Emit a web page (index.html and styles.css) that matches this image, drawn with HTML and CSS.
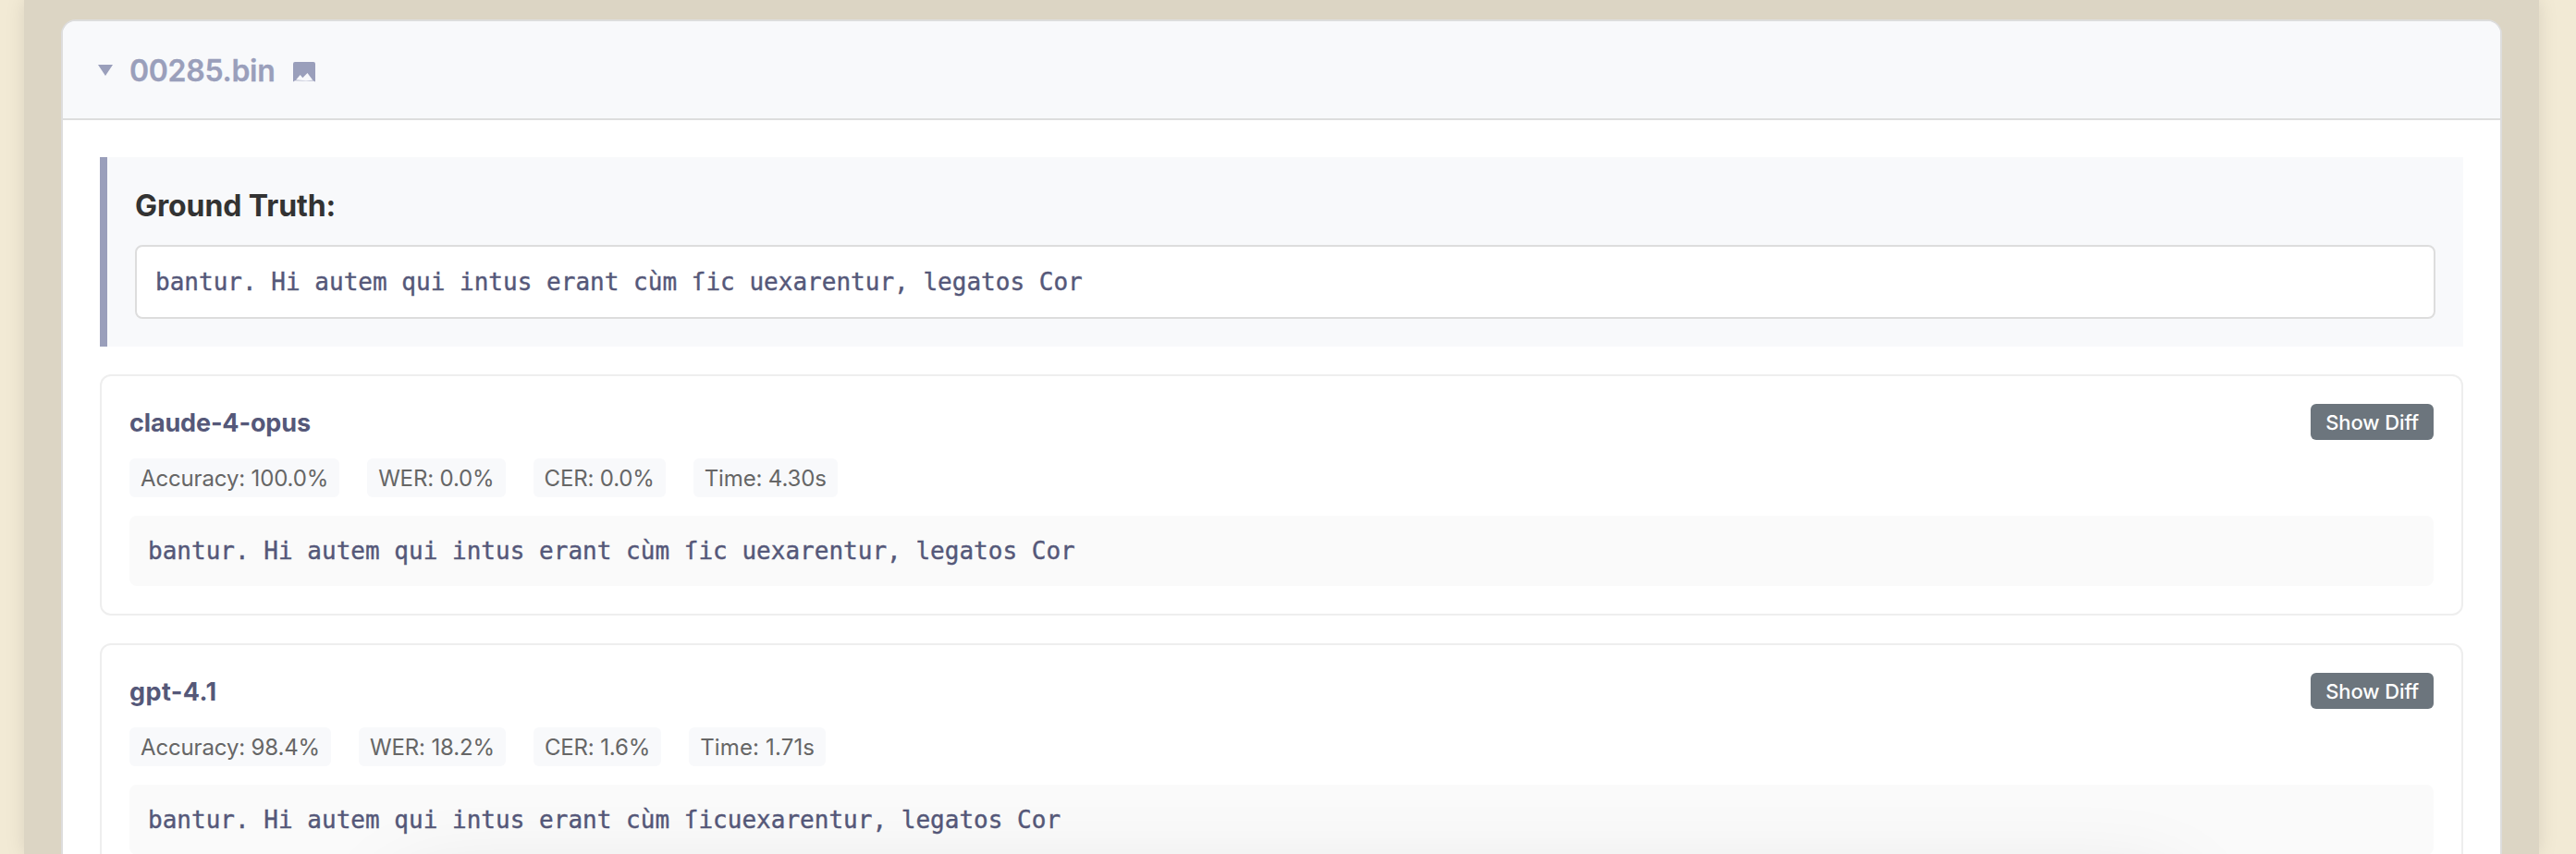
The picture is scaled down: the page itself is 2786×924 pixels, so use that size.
FILE: index.html
```html
<!DOCTYPE html>
<html lang="en">
<head>
<meta charset="utf-8">
<title>00285.bin</title>
<link rel="stylesheet" href="styles.css">
</head>
<body>
<main class="container">
  <section class="sample">
    <header class="sample-header">
      <svg class="caret" viewBox="0 0 16 12"><path d="M0 0h16L8 12z"/></svg>
      <h2 class="sample-title">00285.bin</h2>
      <svg class="image-icon" viewBox="0 0 24 22"><path fill-rule="evenodd" d="M0 21.500V2Q0 0 2 0h20Q24 0 24 2V21.500L22 20.500L14 20.500L2 20.200ZM3 19.400L7.700 14L10.300 17.200L15.500 12L21.300 19.800L14 20.200Z"/></svg>
    </header>
    <div class="sample-body">
      <div class="truth">
        <h3 class="truth-title">Ground Truth:</h3>
        <div class="truth-text">bantur. Hi autem qui intus erant cùm ſic uexarentur, legatos Cor</div>
      </div>
      <article class="result">
        <div class="result-head"><h4 class="model">claude-4-opus</h4><button class="diff">Show Diff</button></div>
        <div class="metrics"><span class="metric">Accuracy: 100.0%</span><span class="metric">WER: 0.0%</span><span class="metric">CER: 0.0%</span><span class="metric">Time: 4.30s</span></div>
        <div class="output">bantur. Hi autem qui intus erant cùm ſic uexarentur, legatos Cor</div>
      </article>
      <article class="result">
        <div class="result-head"><h4 class="model model-short">gpt-4.1</h4><button class="diff">Show Diff</button></div>
        <div class="metrics"><span class="metric">Accuracy: 98.4%</span><span class="metric">WER: 18.2%</span><span class="metric">CER: 1.6%</span><span class="metric metric-wide">Time: 1.71s</span></div>
        <div class="output">bantur. Hi autem qui intus erant cùm ſicuexarentur, legatos Cor</div>
      </article>
    </div>
  </section>
</main>
<div class="bottom-bar"></div>
</body>
</html>
```
FILE: styles.css
```css
* { box-sizing: border-box; }
html, body { height: 100%; overflow: hidden; }
body { margin: 0; background: #f2ead5; font-family: Inter, "Liberation Sans", sans-serif; line-height: 1.4; color: #333; }
h2, h3, h4 { margin: 0; }
.container { height: 924px; overflow: hidden; margin: 0 40px 0 26px; padding: 21px 40px 0; background: #dcd5c4; box-shadow: 0 0 20px rgba(0, 0, 0, 0.1); }
.sample { background: #fff; border: 2px solid #ddd; border-radius: 16px; overflow: hidden; }
.sample-header { display: flex; align-items: center; height: 107px; padding: 0 38px; background: #f8f9fb; border-bottom: 2px solid #ddd; color: #9a9fbb; }
.caret { width: 16px; height: 12px; margin: 1px 18px 0 0; fill: currentColor; }
.sample-title { padding-top: 3px; font-size: 32px; font-weight: 600; letter-spacing: -0.3px; -webkit-text-stroke: 0.3px #9a9fbb; }
.image-icon { width: 24px; height: 22px; margin-left: 20px; margin-top: 4px; fill: currentColor; }
.sample-body { padding: 40px; }
.truth { margin-bottom: 30px; padding: 30px; background: #f8f9fb; border-left: 8px solid #9a9fbb; }
.truth-title { padding-top: 1px; margin-bottom: 19px; font-size: 32px; font-weight: 700; letter-spacing: -0.1px; }
.truth-text, .output { padding: 20px; font-family: "DejaVu Sans Mono", monospace; font-size: 26px; letter-spacing: 0.015px; color: #555879; -webkit-text-stroke: 0.4px #555879; }
.truth-text { background: #fff; border: 2px solid #ddd; border-radius: 8px; }
.result { margin-bottom: 30px; padding: 30px; border: 2px solid #eee; border-radius: 12px; }
.result-head { display: flex; justify-content: space-between; align-items: center; height: 39px; margin-bottom: 20px; }
.model { padding-top: 3px; font-size: 27px; font-weight: 700; letter-spacing: -0.15px; color: #555879; }
.model-short { letter-spacing: 0.4px; }
.diff { height: 39px; padding: 1px 16px 0; border: 0; border-radius: 6px; background: #6c757d; color: #fff; font: 500 22px/38px Inter, "Liberation Sans", sans-serif; letter-spacing: -0.1px; }
.metrics { display: flex; gap: 30px; margin-bottom: 20px; }
.metric { padding: 5px 12px 3px; background: #f8f9fb; border-radius: 6px; font-size: 24px; letter-spacing: -0.15px; color: #666; }
.metric-wide { letter-spacing: 0.15px; }
.output { background: #fafafa; border-radius: 8px; }
.bottom-bar { position: fixed; left: 430px; right: 430px; top: 964px; height: 120px; border-radius: 24px; box-shadow: 0 0 100px rgba(0, 0, 0, 0.13); }
```
